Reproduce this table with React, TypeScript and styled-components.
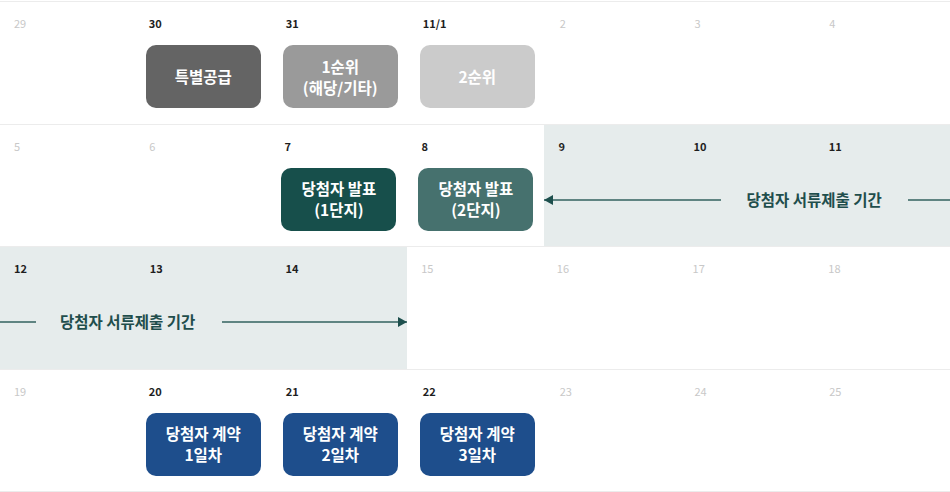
import React from 'react';
import styled, { createGlobalStyle } from 'styled-components';

const GlobalStyle = createGlobalStyle`
  html, body {
    margin: 0;
    padding: 0;
    background: #ffffff;
    font-family: 'Noto Sans CJK KR', 'Noto Sans', sans-serif;
  }
`;

type Tone = 'gray1' | 'gray2' | 'gray3' | 'green1' | 'green2' | 'blue';

const toneColors: Record<Tone, string> = {
  gray1: '#646464',
  gray2: '#9a9a9a',
  gray3: '#cbcbcb',
  green1: '#174f4b',
  green2: '#46716e',
  blue: '#1e4e8c',
};

interface DayData {
  label: string;
  active?: boolean;
  event?: { tone: Tone; lines: string[] };
}

interface WeekData {
  days: DayData[];
  band?: { from: number; to: number; direction: 'left' | 'right' };
}

const weeks: WeekData[] = [
  {
    days: [
      { label: '29' },
      { label: '30', active: true, event: { tone: 'gray1', lines: ['특별공급'] } },
      { label: '31', active: true, event: { tone: 'gray2', lines: ['1순위', '(해당/기타)'] } },
      { label: '11/1', active: true, event: { tone: 'gray3', lines: ['2순위'] } },
      { label: '2' },
      { label: '3' },
      { label: '4' },
    ],
  },
  {
    days: [
      { label: '5' },
      { label: '6' },
      { label: '7', active: true, event: { tone: 'green1', lines: ['당첨자 발표', '(1단지)'] } },
      { label: '8', active: true, event: { tone: 'green2', lines: ['당첨자 발표', '(2단지)'] } },
      { label: '9', active: true },
      { label: '10', active: true },
      { label: '11', active: true },
    ],
    band: { from: 5, to: 8, direction: 'left' },
  },
  {
    days: [
      { label: '12', active: true },
      { label: '13', active: true },
      { label: '14', active: true },
      { label: '15' },
      { label: '16' },
      { label: '17' },
      { label: '18' },
    ],
    band: { from: 1, to: 4, direction: 'right' },
  },
  {
    days: [
      { label: '19' },
      { label: '20', active: true, event: { tone: 'blue', lines: ['당첨자 계약', '1일차'] } },
      { label: '21', active: true, event: { tone: 'blue', lines: ['당첨자 계약', '2일차'] } },
      { label: '22', active: true, event: { tone: 'blue', lines: ['당첨자 계약', '3일차'] } },
      { label: '23' },
      { label: '24' },
      { label: '25' },
    ],
  },
];

const Calendar = styled.div`
  width: 950px;
  padding-top: 1px;
  border-bottom: 1px solid #ececec;
`;

const Week = styled.div`
  display: grid;
  grid-template-columns: repeat(7, 1fr);
  grid-template-rows: 121.5px;
  border-top: 1px solid #ececec;
`;

const Band = styled.div<{ $from: number; $to: number }>`
  grid-row: 1;
  grid-column: ${(p) => p.$from} / ${(p) => p.$to};
  background: #e6ecec;
  display: flex;
  align-items: flex-start;
  padding-top: 74px;
`;

const Line = styled.div<{ $width?: number }>`
  position: relative;
  height: 2px;
  background: #5f8482;
  ${(p) => (p.$width ? `width: ${p.$width}px;` : 'flex: 1;')}
`;

const Head = styled.span<{ $dir: 'left' | 'right' }>`
  position: absolute;
  top: -4px;
  ${(p) => (p.$dir === 'left' ? 'left: 0;' : 'right: 0;')}
  width: 0;
  height: 0;
  border-top: 5px solid transparent;
  border-bottom: 5px solid transparent;
  ${(p) =>
    p.$dir === 'left'
      ? 'border-right: 9px solid #1d4f4d;'
      : 'border-left: 9px solid #1d4f4d;'}
`;

const BandLabel = styled.span<{ $dir: 'left' | 'right' }>`
  margin: -11px ${(p) => (p.$dir === 'left' ? '26px 0 25px' : '27px 0 24px')};
  font-size: 15.5px;
  font-weight: 700;
  line-height: 22px;
  color: #1f4e4c;
  white-space: nowrap;
`;

const Cell = styled.div<{ $col: number }>`
  grid-row: 1;
  grid-column: ${(p) => p.$col};
  padding: 12px 11px 0;
  position: relative;
  z-index: 1;
`;

const DateLabel = styled.div<{ $active?: boolean }>`
  height: 18px;
  line-height: 18px;
  margin-left: 3px;
  font-size: 11px;
  font-weight: ${(p) => (p.$active ? 700 : 400)};
  color: ${(p) => (p.$active ? '#1e1e1e' : '#c8c8c8')};
`;

const EventBox = styled.div<{ $tone: Tone }>`
  margin-top: 13px;
  width: 115px;
  height: 63px;
  border-radius: 10px;
  background: ${(p) => toneColors[p.$tone]};
  color: #ffffff;
  display: flex;
  flex-direction: column;
  align-items: center;
  justify-content: center;
  font-size: 15.5px;
  font-weight: 700;
  line-height: 21px;
  text-align: center;
`;

const PeriodBand: React.FC<{ from: number; to: number; direction: 'left' | 'right' }> = ({
  from,
  to,
  direction,
}) => (
  <Band $from={from} $to={to}>
    {direction === 'left' ? (
      <>
        <Line $width={177}>
          <Head $dir="left" />
        </Line>
        <BandLabel $dir="left">당첨자 서류제출 기간</BandLabel>
        <Line />
      </>
    ) : (
      <>
        <Line $width={36} />
        <BandLabel $dir="right">당첨자 서류제출 기간</BandLabel>
        <Line>
          <Head $dir="right" />
        </Line>
      </>
    )}
  </Band>
);

export default function App() {
  return (
    <>
      <GlobalStyle />
      <Calendar>
        {weeks.map((week, wi) => (
          <Week key={wi}>
            {week.band && (
              <PeriodBand from={week.band.from} to={week.band.to} direction={week.band.direction} />
            )}
            {week.days.map((day, di) => (
              <Cell key={day.label} $col={di + 1}>
                <DateLabel $active={day.active}>{day.label}</DateLabel>
                {day.event && (
                  <EventBox $tone={day.event.tone}>
                    {day.event.lines.map((line) => (
                      <span key={line}>{line}</span>
                    ))}
                  </EventBox>
                )}
              </Cell>
            ))}
          </Week>
        ))}
      </Calendar>
    </>
  );
}
